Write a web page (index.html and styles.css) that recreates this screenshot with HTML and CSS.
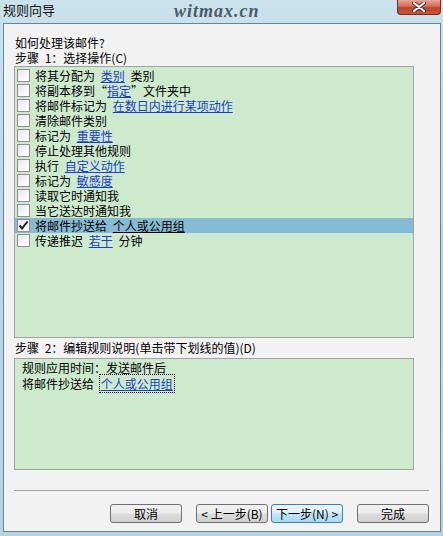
FILE: index.html
```html
<!DOCTYPE html>
<html lang="zh-CN">
<head>
    <meta charset="UTF-8">
    <title>规则向导</title>
    <link rel="stylesheet" href="styles.css">
</head>
<body>
    <div class="window">
        <!-- 标题栏 -->
        <div class="titlebar">
            <span class="title">规则向导</span>
            <span class="watermark">witmax.cn</span>
            <span class="close">
                <svg width="14" height="10" viewBox="0 0 14 10">
                    <path d="M2 1 L12 9 M12 1 L2 9" stroke="#3a3a3a" stroke-width="4" stroke-linecap="round"/>
                    <path d="M2 1 L12 9 M12 1 L2 9" stroke="#ffffff" stroke-width="2" stroke-linecap="round"/>
                </svg>
            </span>
        </div>

        <div class="client">
            <div class="label">如何处理该邮件?</div>
            <div class="label">步骤 1：选择操作(C)</div>

            <div class="listbox actions">
                <div class="row"><span class="check"></span><span>将其分配为 <a>类别</a> 类别</span></div>
                <div class="row"><span class="check"></span><span>将副本移到“<a>指定</a>”文件夹中</span></div>
                <div class="row"><span class="check"></span><span>将邮件标记为 <a>在数日内进行某项动作</a></span></div>
                <div class="row"><span class="check"></span><span>清除邮件类别</span></div>
                <div class="row"><span class="check"></span><span>标记为 <a>重要性</a></span></div>
                <div class="row"><span class="check"></span><span>停止处理其他规则</span></div>
                <div class="row"><span class="check"></span><span>执行 <a>自定义动作</a></span></div>
                <div class="row"><span class="check"></span><span>标记为 <a>敏感度</a></span></div>
                <div class="row"><span class="check"></span><span>读取它时通知我</span></div>
                <div class="row"><span class="check"></span><span>当它送达时通知我</span></div>
                <div class="row selected">
                    <span class="check">
                        <svg width="11" height="11" viewBox="0 0 11 11">
                            <path d="M1.5 5.5 L4 8.5 L9.5 1.5" fill="none" stroke="#1a1a1a" stroke-width="2"/>
                        </svg>
                    </span>
                    <span>将邮件抄送给 <a>个人或公用组</a></span>
                </div>
                <div class="row"><span class="check"></span><span>传递推迟 <a>若干</a> 分钟</span></div>
            </div>

            <div class="label step2">步骤 2：编辑规则说明(单击带下划线的值)(D)</div>

            <div class="listbox desc">
                <div class="line">规则应用时间：发送邮件后</div>
                <div class="line">将邮件抄送给 <a class="focused">个人或公用组</a></div>
            </div>

            <div class="separator"></div>

            <div class="buttons">
                <button class="btn">取消</button>
                <button class="btn back">&lt; 上一步(B)</button>
                <button class="btn default">下一步(N) &gt;</button>
                <button class="btn finish">完成</button>
            </div>
        </div>
    </div>
</body>
</html>
```

FILE: styles.css
```css
body {
    margin: 0;
    padding: 0;
    font-family: 'Noto Sans CJK SC', 'Liberation Sans', sans-serif;
    font-size: 12px;
    color: #000;
}

.window {
    width: 443px;
    height: 536px;
    box-sizing: border-box;
    display: flex;
    flex-direction: column;
    padding: 0 2px 4px 3px;
    background: linear-gradient(180deg, #c9e2ec 0%, #bcd8e5 40%, #b4d3e2 100%);
}

/* 标题栏 */
.titlebar {
    height: 23px;
    display: flex;
    align-items: flex-start;
    flex-shrink: 0;
}

.title {
    font-size: 13px;
    line-height: 20px;
    color: #111;
}

.watermark {
    margin-left: 119px;
    margin-top: 1px;
    font-family: 'Liberation Serif', serif;
    font-style: italic;
    font-weight: bold;
    font-size: 18px;
    line-height: 20px;
    letter-spacing: 1px;
    color: #4c5b69;
}

.close {
    margin-left: auto;
    width: 44px;
    height: 15px;
    box-sizing: border-box;
    display: flex;
    align-items: center;
    justify-content: center;
    border: 1px solid #6e2c20;
    border-top: none;
    border-radius: 0 0 4px 4px;
    background: linear-gradient(180deg, #e9a592 0%, #d56c54 45%, #c0412a 55%, #c9553b 100%);
}

/* 客户区 */
.client {
    flex: 1;
    background: #f2f2f2;
    border: 1px solid #6f8290;
    padding: 11px 11px 0 10px;
    display: flex;
    flex-direction: column;
}

.label {
    line-height: 15px;
    padding-left: 1px;
    word-spacing: 3px;
}

.listbox {
    width: 400px;
    box-sizing: border-box;
    background: #cdeacd;
    border: 1px solid #a3a3a3;
}

.actions {
    margin-top: 1px;
    height: 272px;
    padding-top: 1px;
}

.row {
    height: 15px;
    line-height: 15px;
    display: flex;
    align-items: center;
    gap: 5px;
    padding-left: 2px;
    white-space: nowrap;
    word-spacing: 3px;
}

.row a,
.line a {
    color: #1a3fc4;
    text-decoration: underline;
}

.row.selected {
    background: #86bbd4;
}

.row.selected a {
    color: #000;
}

.check {
    width: 13px;
    height: 13px;
    box-sizing: border-box;
    flex-shrink: 0;
    border: 1px solid #8e8f8f;
    background: linear-gradient(135deg, #e6e6e6 0%, #fdfdfd 80%);
    display: flex;
    align-items: center;
    justify-content: center;
}

.step2 {
    margin-top: 2px;
}

.desc {
    margin-top: 3px;
    height: 112px;
    padding: 1px 0 0 7px;
}

.line {
    line-height: 16px;
    white-space: nowrap;
    word-spacing: 3px;
}

.focused {
    outline: 1px dotted #000;
    outline-offset: 0;
    padding: 0 1px;
}

.separator {
    margin-top: 20px;
    height: 1px;
    background: #a0a0a0;
}

/* 按钮 */
.buttons {
    margin-top: 13px;
    display: flex;
    justify-content: flex-end;
}

.btn {
    width: 72px;
    height: 19px;
    margin-left: 14px;
    padding: 0;
    font-family: 'Noto Sans CJK SC', 'Liberation Sans', sans-serif;
    font-size: 12px;
    line-height: 15px;
    color: #000;
    border: 1px solid #707070;
    border-radius: 3px;
    background: linear-gradient(180deg, #f2f2f2 0%, #ebebeb 48%, #dddddd 52%, #cfcfcf 100%);
}

.btn.default {
    margin-left: 3px;
    border-color: #3c7fb1;
    background: linear-gradient(180deg, #eaf6fd 0%, #d9f0fc 48%, #bee6fd 52%, #a7d9f5 100%);
}
```
